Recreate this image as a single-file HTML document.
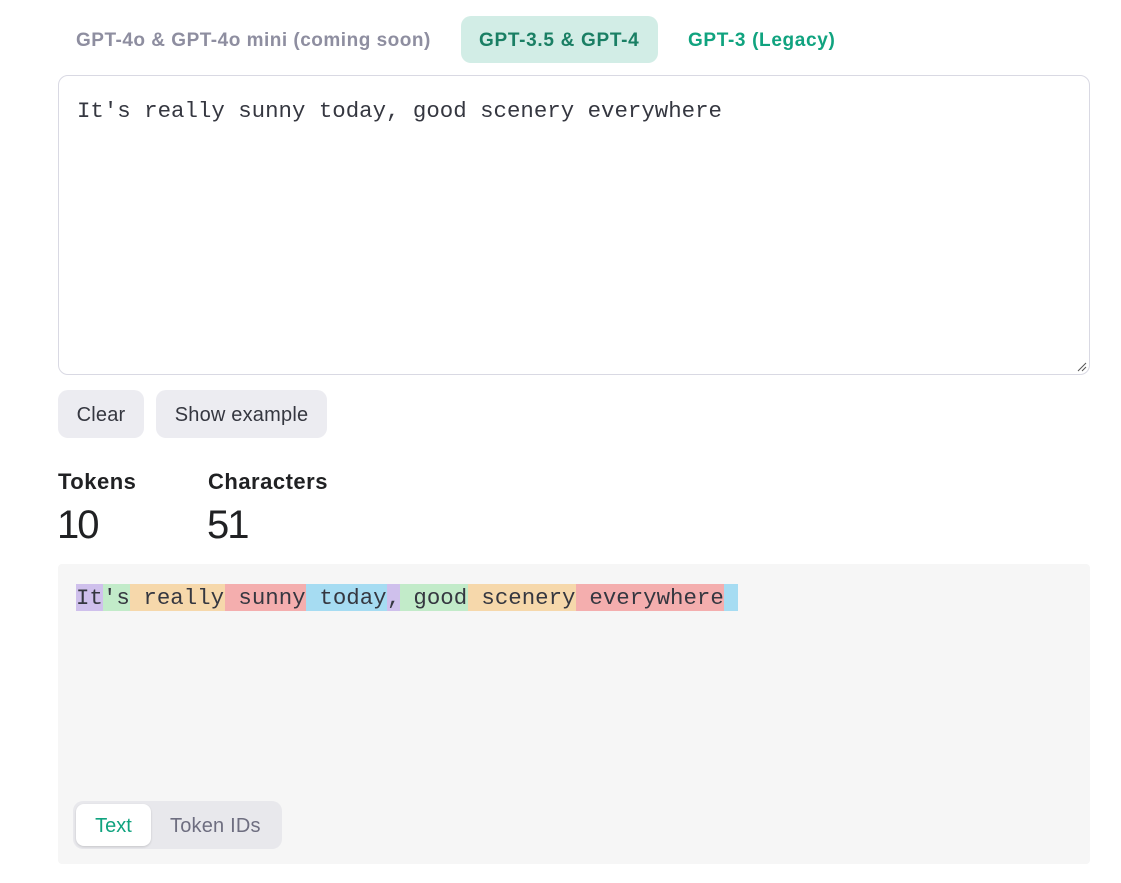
<!DOCTYPE html>
<html><head><meta charset="utf-8"><style>
*{box-sizing:border-box;margin:0;padding:0}
body{width:1121px;height:883px;background:#fff;font-family:"Liberation Sans",sans-serif;position:relative;overflow:hidden;color:#202123}
.tab{position:absolute;top:16px;height:47px;line-height:49px;font-weight:bold;font-size:19px;letter-spacing:0.7px;border-radius:10px;padding:0 18px;white-space:nowrap}
.ta{position:absolute;left:58px;top:75px;width:1032px;height:300px;border:1px solid #d9d9e3;border-radius:10px}
.mono{font-family:"Liberation Mono",monospace;font-size:22.4px;color:#353740}
.btn{position:absolute;top:390px;height:48px;line-height:50px;background:#ececf1;border-radius:10px;font-size:20px;text-align:center;color:#353740;letter-spacing:0.2px}
.lbl{position:absolute;top:469px;font-weight:bold;font-size:22px;letter-spacing:0.5px}
.num{position:absolute;top:503px;font-size:40px;letter-spacing:-2px;color:#202123}
.out{position:absolute;left:58px;top:564px;width:1032px;height:300px;background:#f6f6f6;border-radius:4px}
.tok{position:absolute;top:20px;height:27px;line-height:29px;white-space:pre}
</style></head><body>
<div class="tab" style="left:58px;color:#8e8ea0;letter-spacing:0.5px">GPT-4o &amp; GPT-4o mini (coming soon)</div>
<div class="tab" style="left:461px;width:197px;background:#d2ede6;color:#1a7f64">GPT-3.5 &amp; GPT-4</div>
<div class="tab" style="left:670px;color:#10a37f;letter-spacing:0.65px">GPT-3 (Legacy)</div>
<div class="ta"><div class="mono" style="position:absolute;left:18px;top:22px">It's really sunny today, good scenery everywhere</div>
<svg style="position:absolute;right:2px;bottom:2px" width="12" height="12"><path d="M11 3L3 11M11 7L7 11" stroke="#555" stroke-width="1"/></svg></div>
<div class="btn" style="left:58px;width:86px">Clear</div>
<div class="btn" style="left:156px;width:171px">Show example</div>
<div class="lbl" style="left:58px">Tokens</div>
<div class="lbl" style="left:208px">Characters</div>
<div class="num" style="left:57px">10</div>
<div class="num" style="left:207px">51</div>
<div class="out mono">
<span class="tok" style="left:18px;width:27px;background:#cfc0ec">It</span>
<span class="tok" style="left:45px;width:27px;background:#c2ebc9">'s</span>
<span class="tok" style="left:72px;width:95px;background:#f6d8ab"> really</span>
<span class="tok" style="left:167px;width:81px;background:#f4aeae"> sunny</span>
<span class="tok" style="left:248px;width:81px;background:#a6dcf2"> today</span>
<span class="tok" style="left:329px;width:13px;background:#cfc0ec">,</span>
<span class="tok" style="left:342px;width:68px;background:#c2ebc9"> good</span>
<span class="tok" style="left:410px;width:108px;background:#f6d8ab"> scenery</span>
<span class="tok" style="left:518px;width:148px;background:#f4aeae"> everywhere</span>
<span class="tok" style="left:666px;width:14px;background:#a6dcf2"></span>
<div style="position:absolute;left:15px;top:237px;width:209px;height:48px;background:#e8e8ec;border-radius:10px;font-family:'Liberation Sans',sans-serif;font-size:20px">
<div style="position:absolute;left:3px;top:3px;width:75px;height:42px;background:#fff;border-radius:8px;box-shadow:0 1px 2px rgba(0,0,0,.15);line-height:44px;text-align:center;color:#10a37f">Text</div>
<div style="position:absolute;left:97px;top:0;line-height:50px;color:#6e6e80;letter-spacing:0.2px">Token IDs</div>
</div>
</div>
</body></html>
